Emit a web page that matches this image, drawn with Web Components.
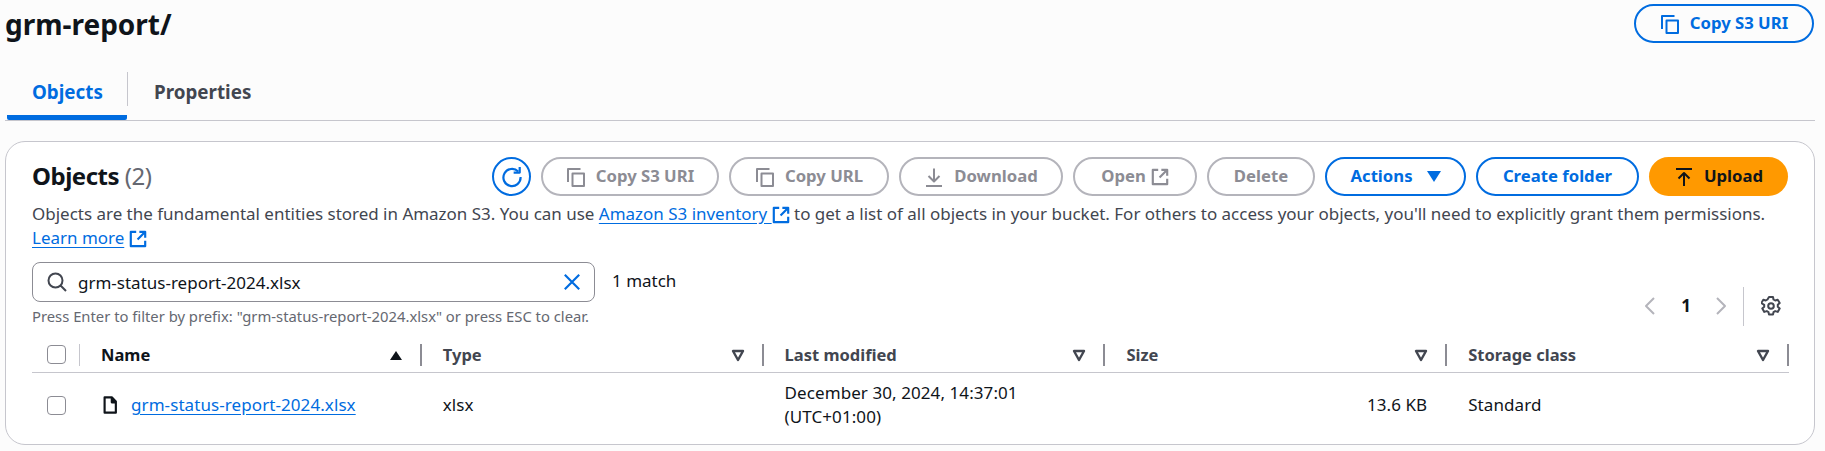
<!DOCTYPE html>
<html lang="en"><head><meta charset="utf-8"><title>grm-report/</title>
<style>
html,body{margin:0;padding:0;background:#fcfcfc}
body{width:1825px;height:451px;overflow:hidden;font-family:"Noto Sans","Liberation Sans",sans-serif;font-size:17px;color:#0f141a}
</style></head><body>
<s3-page></s3-page>
<script>
const P={
 copy:'<path d="M6.500 6.500h11.500v12.500H6.500z"/><path d="M2 15V2h12.500" />',
 down:'<path d="M10 1.500v12.500M4.500 9 10 14.500 15.500 9M2 19h16"/>',
 up:'<path d="M2 2h16" /><path d="M10 19V7M4.500 11.500 10 6l5.500 5.500"/>',
 ext:'<path d="M8 2H2v16h16v-6"/><path d="M11.500 2H18v6.500M17.500 2.500 9.500 10.500"/>',
 refresh:'<path d="M15.600 5A7.800 7.800 0 1 0 17.800 10"/><path d="M11.500 6h5.500V.8"/>',
 search:'<path d="M8.500 1.500a7 7 0 1 0 0 14 7 7 0 0 0 0-14zM13.800 13.800 19 19"/>',
 x:'<path d="m2 2 16 16M18 2 2 18"/>',
 file:'<path d="M4 1.500h8l4.500 4.500v12.500H4z"/><path d="M12 1.500V7h4.500" fill="currentColor"/>',
 left:'<path d="M14 2 6 10l8 8"/>',
 right:'<path d="m6 2 8 8-8 8"/>',
 gear:'<circle cx="10" cy="10" r="2.800"/><path d="M8 1h4l.5 2.500 1.700 1 2.500-.8 2 3.400-1.900 1.700v2l1.900 1.700-2 3.400-2.500-.8-1.700 1-.5 2.500H8l-.5-2.500-1.700-1-2.500.8-2-3.400 1.900-1.700v-2L.3 7.100l2-3.400 2.500.8 1.700-1z"/>'
};
class S3Icon extends HTMLElement{
 connectedCallback(){
  const n=this.getAttribute('name'),s=this.getAttribute('size')||20,w=this.getAttribute('weight')||2;
  this.attachShadow({mode:'open'}).innerHTML=`<style>:host{display:inline-flex;flex:none;line-height:0}svg{fill:none;stroke:currentColor;stroke-width:${w};stroke-linejoin:round;stroke-linecap:butt}</style><svg width="${s}" height="${s}" viewBox="0 0 20 20">${P[n]}</svg>`;
 }
}
customElements.define('s3-icon',S3Icon);

class S3Button extends HTMLElement{
 connectedCallback(){
  this.attachShadow({mode:'open'}).innerHTML=`<style>
  :host{display:inline-flex;box-sizing:border-box;height:39px;padding-bottom:2px;border:2px solid #006ce0;border-radius:20px;align-items:center;justify-content:center;gap:var(--g,10px);color:#006ce0;font-weight:700;font-size:16.700px;white-space:nowrap;width:var(--w);flex:none;background:#fff}
  :host([disabled]){border-color:#b4b4bb;color:#8c8c94}
  :host([primary]){border:0;background:#ff9900;color:#0f141a}
  :host([flat]){background:transparent}
  ::slotted(s3-icon),::slotted(svg){margin-top:2px}
  </style><slot></slot>`;
 }
}
customElements.define('s3-button',S3Button);

class S3Header extends HTMLElement{
 connectedCallback(){
  this.attachShadow({mode:'open'}).innerHTML=`<style>
  :host{display:flex;justify-content:space-between;align-items:center;height:39px;padding:4px 11px 0 5px}
  h1{margin:0;font-size:28px;line-height:36px;font-weight:700;color:#0f141a}
  </style><h1><slot name="title"></slot></h1><slot name="act"></slot>`;
 }
}
customElements.define('s3-header',S3Header);

class S3Tabs extends HTMLElement{
 connectedCallback(){
  this.attachShadow({mode:'open'}).innerHTML=`<style>
  :host{display:flex;margin:28px 10px 0 5px;height:50px;box-sizing:border-box;border-bottom:1px solid #c6c6cd;font-weight:700;font-size:18.800px}
  .t{box-sizing:border-box;height:49px;display:flex;align-items:center;padding-bottom:8px}
  .a{width:120px;margin-left:2px;padding-left:25px;color:#006ce0;border-bottom:5px solid #006ce0;border-radius:0 0 2px 2px;padding-bottom:3px}
  .d{width:1px;height:34px;margin-top:1px;background:#c6c6cd}
  .p{padding-left:26px;color:#424650}
  </style><div class="t a">Objects</div><div class="d"></div><div class="t p">Properties</div>`;
 }
}
customElements.define('s3-tabs',S3Tabs);

class S3Card extends HTMLElement{
 connectedCallback(){
  this.attachShadow({mode:'open'}).innerHTML=`<style>
  :host{display:block;box-sizing:border-box;margin:20px 10px 0 5px;height:304px;border:1px solid #c6c6cd;border-radius:20px;background:#fff;padding:15px 26px 0 26px}
  </style><slot></slot>`;
 }
}
customElements.define('s3-card',S3Card);

class S3Table extends HTMLElement{
 connectedCallback(){
  this.attachShadow({mode:'open'}).innerHTML=`<style>
  :host{display:block;margin-top:12px;margin-right:-1px}
  .r{display:grid;grid-template-columns:48px repeat(5,1fr)}
  .h{height:34px;border-bottom:1px solid #c6c6cd;font-weight:700;color:#424650;font-size:16.500px}
  .c{display:flex;align-items:center;justify-content:space-between;padding-left:21px;height:33px;box-sizing:border-box}
  .c>span{line-height:22px}
  .end{display:flex;align-items:center;gap:17px}
  .sep{width:2px;height:22px;background:#8c8c94}
  .s{width:1px;background:#c6c6cd}
  .box{width:19px;height:19px;box-sizing:border-box;border:1px solid #8c8c94;border-radius:4px;background:#fff;flex:none}
  .ck{padding-left:15px}
  .tri{width:14px;height:14px;color:#424650;flex:none}
  .b{font-weight:400;color:#0f141a;height:64px;align-items:center;letter-spacing:.08px}
  .b>div{padding-left:21px;line-height:24px}
  .b>.ck{padding-left:15px;display:flex;align-items:center}
  .nm{display:flex;align-items:center;gap:12px}
  a{color:#006ce0;text-decoration:underline;text-underline-offset:3px}
  .b>.sz{text-align:right;padding-right:20px;padding-left:0}
  </style>
  <div class="r h">
   <div class="c ck"><div class="box"></div><div class="end"><div class="sep s"></div></div></div>
   <div class="c"><span style="color:#0f141a">Name</span><div class="end"><svg class="tri" viewBox="0 0 14 14"><path d="M1 12 7 3l6 9z" fill="#0f141a"/></svg><div class="sep"></div></div></div>
   ${['Type','Last modified','Size','Storage class'].map(t=>`<div class="c"><span>${t}</span><div class="end"><svg class="tri" viewBox="0 0 14 14"><path d="M2 3h10L7 12z" fill="none" stroke="#424650" stroke-width="2.400" stroke-linejoin="round"/></svg><div class="sep"></div></div></div>`).join('')}
  </div>
  <div class="r b">
   <div class="ck"><div class="box"></div></div>
   <div class="nm"><s3-icon name="file" size="18" weight="2.400"></s3-icon><a>grm-status-report-2024.xlsx</a></div>
   <div>xlsx</div>
   <div>December 30, 2024, 14:37:01<br>(UTC+01:00)</div>
   <div class="sz">13.6 KB</div>
   <div>Standard</div>
  </div>`;
 }
}
customElements.define('s3-table',S3Table);

class S3Objects extends HTMLElement{
 connectedCallback(){
  this.attachShadow({mode:'open'}).innerHTML=`<style>
  :host{display:block}
  .top{display:flex;align-items:center;height:39px}
  h2{margin:0 0 2px;font-size:24px;font-weight:700;line-height:30px;flex:1;letter-spacing:-.5px}
  h2 span{font-weight:400;color:#656871}
  .acts{display:flex;gap:10px}
  .rf{width:39px;height:39px;border:2px solid #006ce0;box-sizing:border-box;border-radius:50%;display:flex;align-items:center;justify-content:center;color:#006ce0;background:#fff}
  p{margin:0;font-size:16.980px;line-height:24px;color:#424650;padding-top:6px;height:50px;white-space:nowrap}
  a{color:#006ce0;text-decoration:underline;text-underline-offset:3px}
  a s3-icon{vertical-align:-4px}
  .filter{display:flex;margin-top:10px}
  .fl{width:563px}
  .in{box-sizing:border-box;height:40px;border:1px solid #8c8c94;border-radius:8px;display:flex;align-items:center;padding:0 13px 0 14px;gap:11px;color:#0f141a}
  .in span{flex:1}
  .hint{font-size:14.800px;color:#656871;margin-top:4px;line-height:20px;white-space:nowrap}
  .m{margin-left:17px;height:38px;line-height:38px;flex:1;color:#0f141a}
  .pg{display:flex;align-items:flex-start;margin-top:25px;margin-right:-1px;color:#b4b4bb;width:149px;height:39px}
  .pg b{color:#0f141a;width:50px;padding-left:1px;text-align:center;line-height:38px;font-size:17px}
  .pg s3-icon{margin-top:9px}
  .dv{width:1px;height:39px;background:#c6c6cd;margin:0 17px 0 12px}
  </style>
  <div class="top"><h2>Objects <span>(2)</span></h2>
   <div class="acts">
    <div class="rf"><s3-icon name="refresh" size="22"></s3-icon></div>
    <s3-button disabled style="--w:178px"><s3-icon name="copy"></s3-icon>Copy S3 URI</s3-button>
    <s3-button disabled style="--w:160px"><s3-icon name="copy"></s3-icon>Copy URL</s3-button>
    <s3-button disabled style="--w:164px"><s3-icon name="down"></s3-icon>Download</s3-button>
    <s3-button disabled style="--w:124px;--g:5px">Open <s3-icon name="ext" size="18" weight="2.400"></s3-icon></s3-button>
    <s3-button disabled style="--w:108px">Delete</s3-button>
    <s3-button style="--w:141px;--g:14px">Actions <svg width="14" height="11" viewBox="0 0 14 11"><path d="M0 0h14L7 11z" fill="#006ce0"/></svg></s3-button>
    <s3-button style="--w:163px">Create folder</s3-button>
    <s3-button primary style="--w:139px"><s3-icon name="up"></s3-icon>Upload</s3-button>
   </div>
  </div>
  <p>Objects are the fundamental entities stored in Amazon S3. You can use <a>Amazon S3 inventory </a><a style="text-decoration:none"><s3-icon name="ext" size="18" weight="2.400"></s3-icon></a> to get a list of all objects in your bucket. For others to access your objects, you'll need to explicitly grant them permissions.<br><a>Learn more</a> <a style="text-decoration:none"><s3-icon name="ext" size="18" weight="2.400"></s3-icon></a></p>
  <div class="filter">
   <div class="fl"><div class="in"><s3-icon name="search" style="color:#424650"></s3-icon><span>grm-status-report-2024.xlsx</span><s3-icon name="x" style="color:#006ce0" size="18" weight="2.400"></s3-icon></div>
   <div class="hint">Press Enter to filter by prefix: "grm-status-report-2024.xlsx" or press ESC to clear.</div></div>
   <div class="m">1 match</div>
   <div class="pg"><s3-icon name="left"></s3-icon><b>1</b><s3-icon name="right"></s3-icon><div class="dv"></div><s3-icon name="gear" style="color:#424650"></s3-icon></div>
  </div>
  <s3-table></s3-table>`;
 }
}
customElements.define('s3-objects',S3Objects);

class S3Page extends HTMLElement{
 connectedCallback(){
  this.attachShadow({mode:'open'}).innerHTML=`<style>:host{display:block}</style>
  <s3-header><span slot="title">grm-report/</span><s3-button slot="act" flat style="--w:180px"><s3-icon name="copy"></s3-icon>Copy S3 URI</s3-button></s3-header>
  <s3-tabs></s3-tabs>
  <s3-card><s3-objects></s3-objects></s3-card>`;
 }
}
customElements.define('s3-page',S3Page);
</script>
</body></html>
